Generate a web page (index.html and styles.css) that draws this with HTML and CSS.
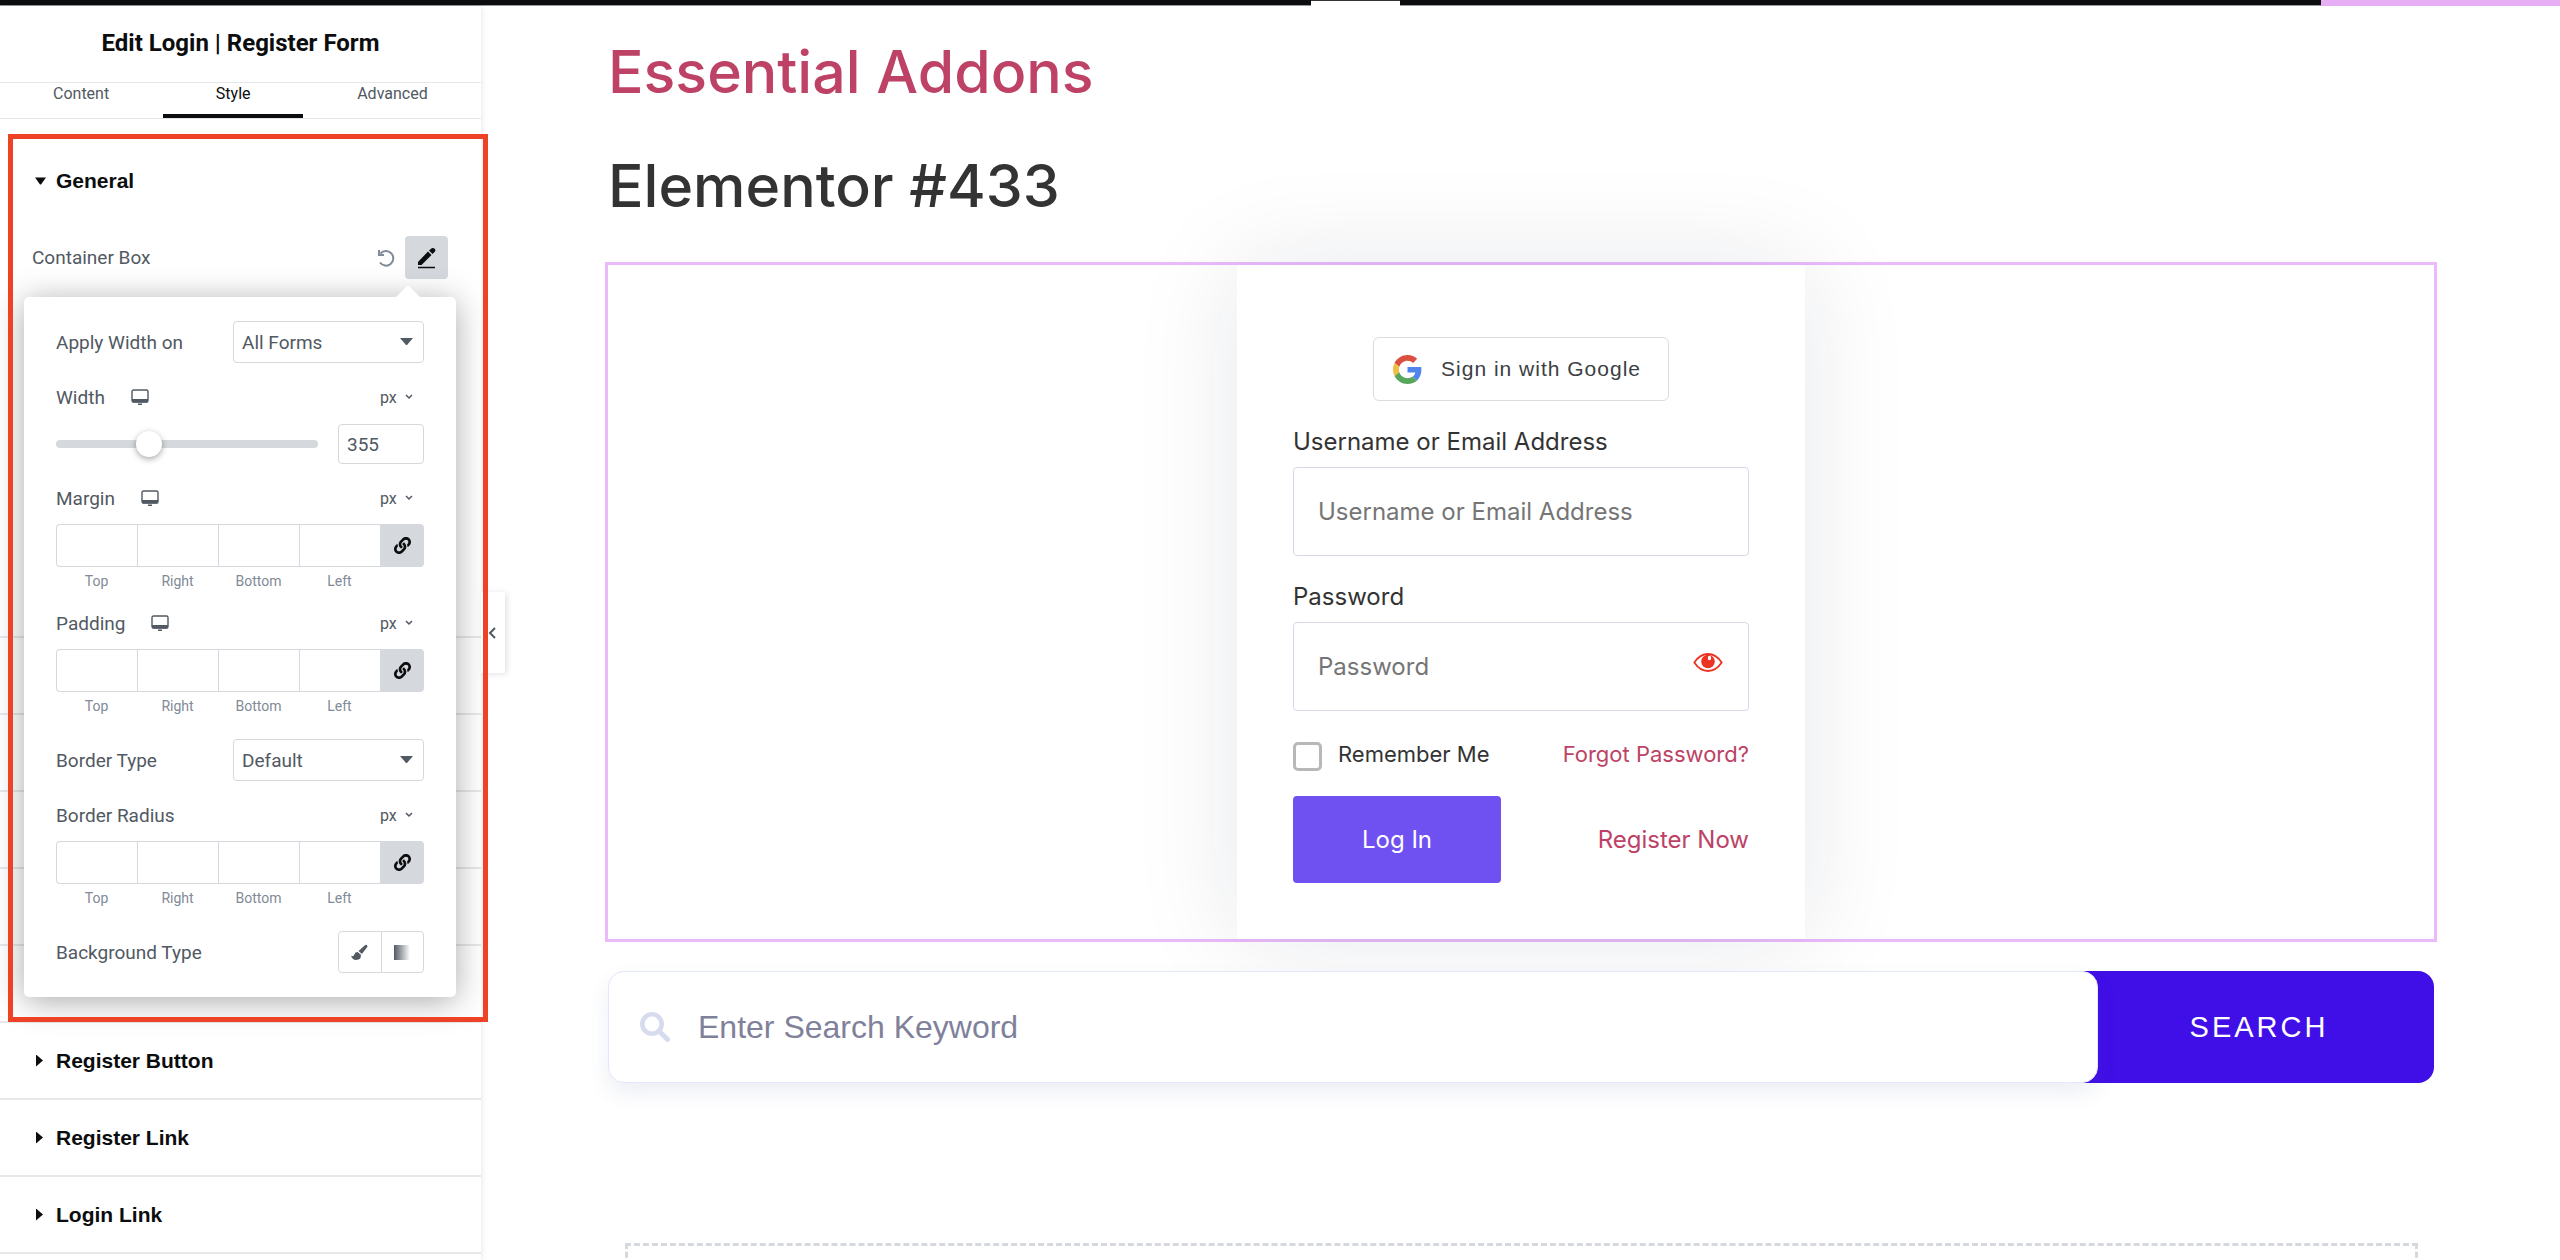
FILE: index.html
```html
<!DOCTYPE html>
<html lang="en">
<head>
<meta charset="utf-8">
<title>Edit Login | Register Form</title>
<link rel="stylesheet" href="styles.css">
</head>
<body>
<svg class="sprite" aria-hidden="true">
  <symbol id="i-desktop" viewBox="0 0 18 16"><rect x="1" y="1" width="16" height="12" rx="1.5" fill="none" stroke="currentColor" stroke-width="1.4"/><path d="M1 10h16v2.500q0 1-1 1H2q-1 0-1-1zM7 14.500h4V16H7z" fill="currentColor"/></symbol>
  <symbol id="i-link" viewBox="0 0 512 512"><path fill="currentColor" d="M326.612 185.391c59.747 59.809 58.927 155.698.36 214.590-.11.120-.240.250-.360.370l-67.200 67.200c-59.270 59.270-155.699 59.262-214.960 0-59.270-59.260-59.270-155.700 0-214.960l37.106-37.106c9.840-9.840 26.786-3.300 27.294 10.606.648 17.722 3.826 35.527 9.690 52.721 1.986 5.822.567 12.262-3.783 16.612l-13.087 13.087c-28.026 28.026-28.905 73.660-1.155 101.960 28.024 28.579 74.086 28.749 102.325.510l67.200-67.190c28.191-28.191 28.073-73.757 0-101.830-3.701-3.694-7.429-6.564-10.341-8.569a16.037 16.037 0 0 1-6.947-12.606c-.396-10.567 3.348-21.456 11.698-29.806l21.054-21.055c5.521-5.521 14.182-6.199 20.584-1.731a152.482 152.482 0 0 1 20.522 17.197zM467.547 44.449c-59.261-59.262-155.690-59.270-214.960 0l-67.200 67.200c-.120.120-.250.250-.360.370-58.566 58.892-59.387 154.781.360 214.590a152.454 152.454 0 0 0 20.521 17.196c6.402 4.468 15.064 3.789 20.584-1.731l21.054-21.055c8.350-8.350 12.094-19.239 11.698-29.806a16.037 16.037 0 0 0-6.947-12.606c-2.912-2.005-6.640-4.875-10.341-8.569-28.073-28.073-28.191-73.639 0-101.830l67.200-67.190c28.239-28.239 74.300-28.069 102.325.510 27.750 28.300 26.872 73.934-1.155 101.960l-13.087 13.087c-4.350 4.350-5.769 10.790-3.783 16.612 5.864 17.194 9.042 34.999 9.690 52.721.509 13.906 17.454 20.446 27.294 10.606l37.106-37.106c59.271-59.259 59.271-155.699.001-214.959z"/></symbol>
</svg>

<header class="topbar"><span class="topbar-left"></span><span class="topbar-tab"></span><span class="topbar-right"></span><span class="topbar-publish"></span></header>

<div class="workspace">
  <aside class="panel">
    <h1 class="panel-title">Edit Login | Register Form</h1>
    <nav class="tabs">
      <a class="tab" href="#content">Content</a>
      <a class="tab active" href="#style">Style</a>
      <a class="tab" href="#advanced">Advanced</a>
    </nav>

    <section class="section general">
      <button class="section-head" type="button"><span class="caret down"></span>General</button>
      <div class="container-row">
        <span>Container Box</span>
        <button class="undo" type="button" aria-label="Reset"><svg viewBox="0 0 18 18"><path d="M3.500 4.500A7.300 7.300 0 1 1 3 13.500" fill="none" stroke="currentColor" stroke-width="2"/><path d="M1 1v6h6V5H3V1z" fill="currentColor"/></svg></button>
        <button class="edit" type="button" aria-label="Edit"><svg viewBox="0 0 20 22"><path d="M1 15v3h3.500L14.500 8 11 4.500zM12 3.500 15.500 7l2.500-2.500q1-1.500-.300-2.700-1.500-1.500-3-.500z" fill="currentColor"/><path d="M1 20.500h17" stroke="currentColor" stroke-width="1.500"/></svg></button>
      </div>
    </section>
    <section class="section covered"></section>
    <section class="section covered"></section>
    <section class="section covered"></section>
    <section class="section covered"></section>
    <section class="section covered"></section>
    <section class="section"><button class="section-head" type="button"><span class="caret"></span>Register Button</button></section>
    <section class="section"><button class="section-head" type="button"><span class="caret"></span>Register Link</button></section>
    <section class="section"><button class="section-head" type="button"><span class="caret"></span>Login Link</button></section>

    <div class="popover">
      <div class="row">
        <label for="apply">Apply Width on</label>
        <select class="select" id="apply"><option>All Forms</option></select>
      </div>
      <div class="group">
        <div class="field-head">
          <label for="width">Width</label><svg class="device"><use href="#i-desktop"/></svg>
          <select class="unit" aria-label="Width unit"><option>px</option></select>
        </div>
        <div class="slider-row">
          <input class="slider" type="range" min="0" max="1045" value="355" aria-label="Width slider">
          <input class="number" id="width" type="text" value="355">
        </div>
      </div>
      <div class="group">
        <div class="field-head">
          <span>Margin</span><svg class="device"><use href="#i-desktop"/></svg>
          <select class="unit" aria-label="Margin unit"><option>px</option></select>
        </div>
        <div class="dims">
          <input id="mt" type="text"><input id="mr" type="text"><input id="mb" type="text"><input id="ml" type="text">
          <button type="button" aria-label="Link values"><svg><use href="#i-link"/></svg></button>
          <label for="mt">Top</label><label for="mr">Right</label><label for="mb">Bottom</label><label for="ml">Left</label>
        </div>
      </div>
      <div class="group">
        <div class="field-head">
          <span>Padding</span><svg class="device"><use href="#i-desktop"/></svg>
          <select class="unit" aria-label="Padding unit"><option>px</option></select>
        </div>
        <div class="dims">
          <input id="pt" type="text"><input id="pr" type="text"><input id="pb" type="text"><input id="pl" type="text">
          <button type="button" aria-label="Link values"><svg><use href="#i-link"/></svg></button>
          <label for="pt">Top</label><label for="pr">Right</label><label for="pb">Bottom</label><label for="pl">Left</label>
        </div>
      </div>
      <div class="row">
        <label for="btype">Border Type</label>
        <select class="select" id="btype"><option>Default</option></select>
      </div>
      <div class="group">
        <div class="field-head">
          <span>Border Radius</span>
          <select class="unit" aria-label="Border radius unit"><option>px</option></select>
        </div>
        <div class="dims">
          <input id="rt" type="text"><input id="rr" type="text"><input id="rb" type="text"><input id="rl" type="text">
          <button type="button" aria-label="Link values"><svg><use href="#i-link"/></svg></button>
          <label for="rt">Top</label><label for="rr">Right</label><label for="rb">Bottom</label><label for="rl">Left</label>
        </div>
      </div>
      <div class="row">
        <span>Background Type</span>
        <div class="choices">
          <button type="button" aria-label="Classic"><svg viewBox="0 0 18 18"><path d="M17 1.200Q18 2 17 3.500L11.500 10.500 8 7.500 14.500 1.500Q16 .300 17 1.200z" fill="currentColor"/><path d="M7 8.500 10.500 11.500Q11 17 5.500 17 1.500 17 0 12.500 2.500 14 3.500 11 4.500 8.500 7 8.500z" fill="currentColor"/></svg></button>
          <button type="button" aria-label="Gradient"><span class="gradient"></span></button>
        </div>
      </div>
    </div>
    <button class="collapse" type="button" aria-label="Hide panel"><svg viewBox="0 0 8 12"><path d="M7 1 2 6l5 5" fill="none" stroke="currentColor" stroke-width="2"/></svg></button>
    <div class="highlight"></div>
  </aside>

  <main class="canvas">
    <h2 class="site-title"><a href="#home">Essential Addons</a></h2>
    <h2 class="page-title">Elementor #433</h2>
    <div class="widget">
      <form class="login">
        <button class="google" type="button">
          <svg viewBox="0 0 48 48"><path fill="#DB4F3F" d="M24 9.500c3.540 0 6.710 1.220 9.210 3.600l6.850-6.850C35.900 2.380 30.470 0 24 0 14.620 0 6.510 5.380 2.560 13.220l7.980 6.190C12.430 13.720 17.740 9.500 24 9.500z"/><path fill="#5086EC" d="M46.980 24.550c0-1.570-.150-3.090-.380-4.550H24v9.020h12.940c-.580 2.960-2.260 5.480-4.780 7.180l7.730 6c4.510-4.180 7.090-10.360 7.090-17.650z"/><path fill="#F2BE42" d="M10.530 28.590c-.480-1.450-.760-2.990-.760-4.590s.270-3.140.760-4.590l-7.980-6.190C.920 16.460 0 20.120 0 24c0 3.880.920 7.540 2.560 10.780l7.970-6.190z"/><path fill="#58A55C" d="M24 48c6.480 0 11.930-2.130 15.890-5.810l-7.730-6c-2.150 1.450-4.920 2.300-8.160 2.300-6.260 0-11.570-4.220-13.470-9.910l-7.980 6.190C6.510 42.620 14.620 48 24 48z"/></svg>
          Sign in with Google
        </button>
        <label class="field-label" for="user">Username or Email Address</label>
        <input class="field" id="user" type="text" placeholder="Username or Email Address">
        <label class="field-label" for="pass">Password</label>
        <div class="password">
          <input class="field" id="pass" type="password" placeholder="Password">
          <button class="eye" type="button" aria-label="Show password"><svg viewBox="0 0 30 19"><path d="M1.300 9.500Q7 1 15 1t13.700 8.500Q23 18 15 18T1.300 9.500z" fill="none" stroke="currentColor" stroke-width="1.800"/><circle cx="15" cy="8.500" r="6.800" fill="currentColor"/><ellipse cx="16.500" cy="5" rx="1.700" ry="2.200" fill="#fff"/></svg></button>
        </div>
        <div class="options">
          <input id="remember" type="checkbox"><label for="remember">Remember Me</label>
          <a href="#forgot">Forgot Password?</a>
        </div>
        <div class="actions">
          <button class="submit" type="submit">Log In</button>
          <a href="#register">Register Now</a>
        </div>
      </form>
    </div>
    <form class="search">
      <div class="search-box">
        <svg viewBox="0 0 30 30"><circle cx="12" cy="12" r="9.700" fill="none" stroke="currentColor" stroke-width="4.600"/><path d="m20 20 7.500 7.500" stroke="currentColor" stroke-width="5" stroke-linecap="round"/></svg>
        <input type="text" placeholder="Enter Search Keyword" aria-label="Search keyword">
      </div>
      <button type="submit">SEARCH</button>
    </form>
    <div class="drop-zone"></div>
  </main>
</div>
</body>
</html>
```
FILE: styles.css
```css
* { box-sizing: border-box; }
body {
  margin: 0;
  height: 100vh;
  overflow: hidden;
  display: flex;
  flex-direction: column;
  background: #fff;
  font-family: Roboto, "Liberation Sans", sans-serif;
}
button, input, select { font: inherit; color: inherit; margin: 0; }
button { background: none; border: 0; padding: 0; cursor: pointer; }
a { text-decoration: none; color: inherit; }
.sprite { position: absolute; width: 0; height: 0; }

.topbar {
  flex: none;
  height: 6px;
  display: flex;
  background: #0c0d0e;
  border-bottom: 1px solid #999;
}
.topbar-left { flex: 1311; }
.topbar-tab { flex: 89; background: #fff; border-top: 1px solid #333; margin-bottom: -1px; }
.topbar-right { flex: 921; }
.topbar-publish { flex: 239; background: #e7aef6; margin-bottom: -1px; }

.workspace { flex: 1; min-height: 0; display: flex; }

/* Editor panel */
.panel {
  position: relative;
  z-index: 1;
  flex: none;
  width: 481px;
  background: #fff;
  box-shadow: 0 0 6px rgba(0, 0, 0, .12);
  color: #515962;
  font-size: 19px;
}
.panel-title {
  margin: 0;
  height: 77px;
  border-bottom: 1px solid #e6e8ea;
  color: #0c0d0e;
  font-size: 24px;
  line-height: 75px;
  text-align: center;
}
.tabs {
  display: flex;
  gap: 25px;
  padding-left: 24px;
  height: 36px;
  border-bottom: 1px solid #e6e8ea;
  font-size: 16px;
}
.tab { padding: 0 29px; text-align: center; line-height: 22px; }
.tab.active { width: 140px; color: #0c0d0e; border-bottom: 4px solid #0c0d0e; }
.section { height: 77px; border-bottom: 2px solid #e6e8ea; }
.section-head {
  display: flex;
  align-items: center;
  width: 100%;
  height: 75px;
  padding-left: 35px;
  color: #0c0d0e;
  font: bold 21px "Liberation Sans", Arial, sans-serif;
}
.caret {
  width: 21px;
  height: 12px;
  background: currentColor;
  clip-path: polygon(1px 0, 8px 50%, 1px 100%);
}
.caret.down { clip-path: polygon(0 3px, 11px 3px, 6px 10px, 5px 10px); }
.general { height: auto; min-height: 519px; padding-top: 24px; }
.container-row {
  display: flex;
  align-items: center;
  margin-top: 18px;
  padding: 0 33px 0 32px;
}
.undo { margin-left: auto; width: 18px; height: 18px; color: #818a96; }
.edit {
  display: grid;
  place-items: center;
  width: 43px;
  height: 43px;
  margin-left: 10px;
  border-radius: 4px;
  background: #d5d8dc;
  color: #0c0d0e;
}
.undo svg { display: block; width: 18px; height: 18px; }
.edit svg { width: 20px; height: 22px; }

.popover {
  position: absolute;
  top: 291px;
  left: 24px;
  width: 432px;
  display: flex;
  flex-direction: column;
  gap: 22px;
  padding: 21px 32px 24px;
  border-radius: 5px;
  background: #fff;
  box-shadow: 0 4px 32px rgba(0, 0, 0, .34);
}
.popover::before {
  content: "";
  position: absolute;
  right: 36px;
  bottom: 100%;
  border: 12px solid transparent;
  border-top: 0;
  border-bottom-color: #fff;
}
.row { display: flex; align-items: center; justify-content: space-between; padding-top: 3px; }
.select {
  appearance: none;
  width: 191px;
  height: 42px;
  padding: 0 8px;
  border: 1px solid #d5d8dc;
  border-radius: 4px;
  background: #fff url("data:image/svg+xml,%3Csvg xmlns='http://www.w3.org/2000/svg' width='13' height='8'%3E%3Cpath d='M0 0h13L7 7H6z' fill='%23515962'/%3E%3C/svg%3E") no-repeat right 10px center;
}
.field-head { display: flex; align-items: center; height: 24px; }
.device { width: 18px; height: 16px; margin-left: 26px; }
.unit {
  appearance: none;
  width: 44px;
  margin-left: auto;
  padding: 0;
  border: 0;
  background: url("data:image/svg+xml,%3Csvg xmlns='http://www.w3.org/2000/svg' width='8' height='6'%3E%3Cpath d='M1 1l3 3 3-3' fill='none' stroke='%23515962' stroke-width='1.500'/%3E%3C/svg%3E") no-repeat right 11px center;
  font-size: 16px;
}
.slider-row { display: flex; align-items: center; justify-content: space-between; margin-top: 15px; }
.slider { appearance: none; width: 262px; height: 8px; border-radius: 4px; background: #d5d8dc; }
.slider::-webkit-slider-thumb {
  appearance: none;
  width: 26px;
  height: 26px;
  border-radius: 50%;
  background: #fff;
  box-shadow: 0 2px 6px rgba(0, 0, 0, .35);
}
.number { width: 86px; height: 40px; padding: 0 8px; border: 1px solid #d5d8dc; border-radius: 4px; background: #fff; }
.dims { display: grid; grid-template-columns: repeat(4, 81px) 44px; margin-top: 14px; }
.dims input { width: 100%; height: 43px; padding: 0 8px; border: 1px solid #d5d8dc; border-right: 0; background: #fff; text-align: center; }
.dims input:first-child { border-radius: 4px 0 0 4px; }
.dims button { display: grid; place-items: center; background: #d5d8dc; border-radius: 0 4px 4px 0; color: #0c0d0e; }
.dims svg { width: 17px; height: 17px; }
.dims label { margin-top: 7px; color: #818a96; font-size: 14px; line-height: 15px; text-align: center; }
.choices { display: flex; width: 86px; height: 42px; border: 1px solid #d5d8dc; border-radius: 4px; }
.choices button { flex: 1; display: grid; place-items: center; }
.choices button + button { border-left: 1px solid #d5d8dc; }
.choices svg { width: 17px; height: 17px; }
.gradient { width: 16px; height: 15px; background: linear-gradient(90deg, #515962, #fff); }

.collapse {
  position: absolute;
  top: 586px;
  left: 481px;
  width: 24px;
  height: 81px;
  padding-left: 7px;
  background: #fff;
  box-shadow: 2px 1px 6px rgba(0, 0, 0, .12);
  text-align: left;
}
.collapse svg { width: 8px; height: 12px; }
.highlight {
  position: absolute;
  top: 128px;
  left: 8px;
  width: 480px;
  height: 888px;
  border: 5px solid #ee4226;
  pointer-events: none;
}

/* Page preview */
.canvas {
  flex: 1;
  min-width: 0;
  padding: 26px 126px 0 127px;
  font-family: Inter, "Open Sans", sans-serif;
  font-size: 24px;
  color: #333;
}
.site-title, .page-title { margin: 0 0 34px; font-size: 59px; font-weight: 500; line-height: 80px; }
.site-title, .options a, .actions a { color: #bd4266; }
.page-title { margin-bottom: 36px; }
.widget {
  display: flex;
  justify-content: center;
  margin: 0 -3px;
  border: 3px solid #eabafb;
}
.login {
  display: flex;
  flex-direction: column;
  width: 568px;
  padding: 72px 56px 56px;
  background: #fff;
  box-shadow: 0 0 100px rgba(20, 30, 60, .1);
}
.google {
  display: flex;
  align-items: center;
  justify-content: space-between;
  align-self: center;
  width: 296px;
  height: 64px;
  padding: 0 27px 0 19px;
  border: 1px solid #dadce0;
  border-radius: 6px;
  color: #3c4043;
  font: 21px "Liberation Sans", Arial, sans-serif;
  letter-spacing: 1px;
}
.google svg { width: 29px; height: 29px; }
.field-label { margin-top: 25px; line-height: 32px; }
.field {
  width: 100%;
  height: 89px;
  margin-top: 9px;
  padding: 0 24px;
  border: 1px solid #d8d6ec;
  border-radius: 4px;
  background: #fff;
}
.field::placeholder { color: #757575; opacity: 1; }
.password { display: grid; }
.password > * { grid-area: 1 / 1; }
.eye { place-self: center end; margin-right: 26px; width: 30px; height: 19px; color: #ea3323; }
.eye svg { display: block; width: 30px; height: 19px; }
.options { display: flex; align-items: flex-start; margin-top: 29px; font-size: 22px; line-height: 28px; }
.options input {
  appearance: none;
  width: 29px;
  height: 29px;
  margin: 2px 16px 0 0;
  border: 3px solid #b8b8b8;
  border-radius: 5px;
  background: #fff;
}
.options a { margin-left: auto; }
.actions { display: flex; align-items: center; justify-content: space-between; margin-top: 25px; }
.submit { width: 208px; height: 87px; border-radius: 4px; background: #6f51f1; color: #fff; }

.search { display: flex; height: 112px; margin-top: 29px; font-family: "Liberation Sans", Arial, sans-serif; }
.search-box {
  position: relative;
  z-index: 1;
  flex: 1;
  display: flex;
  align-items: center;
  gap: 28px;
  margin-right: -14px;
  padding-left: 31px;
  border: 1px solid #e4e6f9;
  border-radius: 16px;
  background: #fff;
  color: #d7dbee;
  box-shadow: 0 10px 20px rgba(80, 100, 150, .1);
}
.search-box svg { flex: none; width: 30px; height: 30px; }
.search-box input { flex: 1; height: 100%; padding: 0; border: 0; background: none; color: #7f819b; font-size: 32px; }
.search-box input::placeholder { color: #7f819b; opacity: 1; }
.search-box input, .field, .number { outline: 0; }
.search button {
  width: 350px;
  border-radius: 0 16px 16px 0;
  background: #400ee6;
  color: #fff;
  font-size: 29px;
  letter-spacing: 3px;
}
.drop-zone { height: 200px; margin: 160px 16px 0 17px; border: 3px dashed #d5d8dc; }
```
